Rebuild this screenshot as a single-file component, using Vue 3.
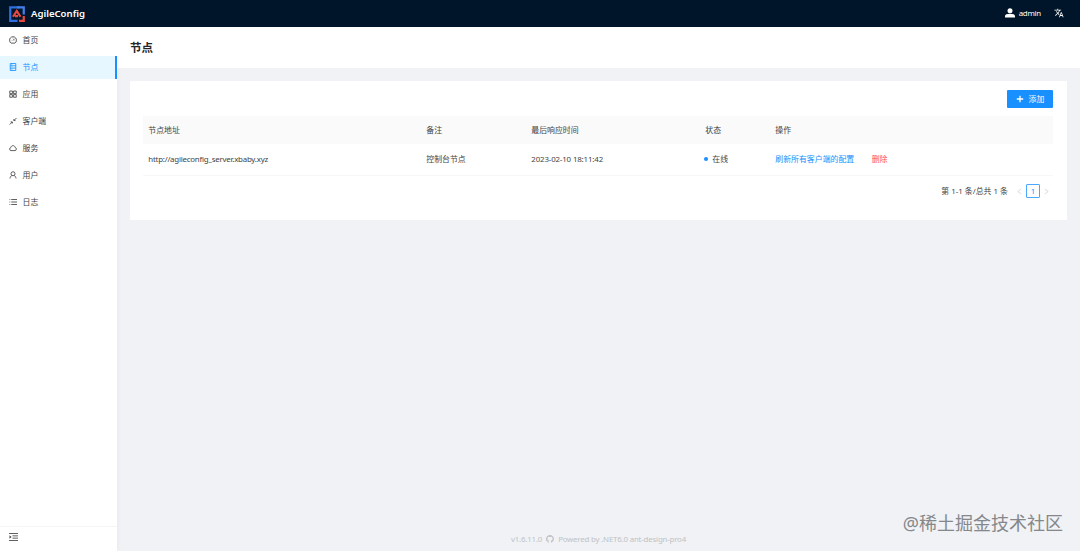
<template>
  <div class="layout">
    <header class="top-bar">
      <div class="brand">
        <svg class="logo" viewBox="0 0 32 32">
          <path d="M21 2.500H2.500V29.500H17" fill="none" stroke="#2f6fe0" stroke-width="4.500" />
          <path d="M16 2.500H29.500V17" fill="none" stroke="#3f80ea" stroke-width="4.500" />
          <path d="M29.500 20V29.500H20" fill="none" stroke="#e9483f" stroke-width="4.500" />
          <path d="M8 21.500L15.500 10L23 21.500M12 20H18" fill="none" stroke="#e9483f" stroke-width="4.500" />
        </svg>
        <span class="brand-name">AgileConfig</span>
      </div>
      <div class="top-right">
        <svg class="avatar" viewBox="0 0 20 20" fill="#fff">
          <circle cx="10" cy="5.500" r="5" />
          <path d="M0 19v-2.500C0 13 4 11.500 10 11.500S20 13 20 16.500V19z" />
        </svg>
        <span class="user-name">admin</span>
        <svg class="lang" viewBox="0 0 24 24" fill="#fff">
          <path d="M12.870 15.070l-2.540-2.510.03-.03A17.500 17.500 0 0 0 14.070 6H17V4h-7V2H8v2H1v2h11.170C11.500 7.920 10.440 9.750 9 11.350 8.070 10.320 7.300 9.190 6.690 8h-2c.73 1.630 1.730 3.170 2.980 4.560l-5.090 5.020L4 19l5-5 3.110 3.110.76-2.040zM18.500 10h-2L12 22h2l1.120-3h4.750L21 22h2l-4.500-12zm-2.620 7l1.620-4.330L19.120 17h-3.240z" />
        </svg>
      </div>
    </header>

    <div class="body">
      <aside class="sider">
        <ul class="menu">
          <li
            v-for="item in menus"
            :key="item.name"
            :class="['menu-item', active === item.name ? 'selected' : '']"
            @click="active = item.name"
          >
            <svg class="menu-icon" viewBox="0 0 16 16">
              <path v-for="d in item.paths" :key="d" :d="d" />
            </svg>
            <span>{{ item.name }}</span>
          </li>
        </ul>
        <div class="collapse">
          <svg class="menu-icon" viewBox="0 0 18 16">
            <path d="M0 1h18M7 5.700h11M7 10.300h11M0 15h18" />
            <path d="M1 4.500v7L5 8z" class="solid" />
          </svg>
        </div>
      </aside>

      <main class="main">
        <div class="page-header">
          <h1>节点</h1>
        </div>

        <section class="card">
          <div class="toolbar">
            <button type="button" class="primary-button">
              <svg viewBox="0 0 10 10"><path d="M5 1v8M1 5h8" /></svg>
              <span>添加</span>
            </button>
          </div>

          <table>
            <colgroup>
              <col class="col-address" />
              <col class="col-remark" />
              <col class="col-time" />
              <col class="col-status" />
              <col />
            </colgroup>
            <thead>
              <tr>
                <th>节点地址</th>
                <th>备注</th>
                <th>最后响应时间</th>
                <th>状态</th>
                <th>操作</th>
              </tr>
            </thead>
            <tbody>
              <tr v-for="node in nodes" :key="node.address">
                <td class="address">{{ node.address }}</td>
                <td>{{ node.remark }}</td>
                <td class="time">{{ node.lastEchoTime }}</td>
                <td><i class="dot"></i>在线</td>
                <td>
                  <a class="link">刷新所有客户端的配置</a>
                  <a class="link danger">删除</a>
                </td>
              </tr>
            </tbody>
          </table>

          <div class="pagination">
            <span class="total">第 1-1 条/总共 1 条</span>
            <svg class="arrow" viewBox="0 0 6 8"><path d="M5 1L1 4l4 3" /></svg>
            <span class="page">1</span>
            <svg class="arrow" viewBox="0 0 6 8"><path d="M1 1l4 3-4 3" /></svg>
          </div>
        </section>

        <footer class="footer">
          <span>v1.6.11.0</span>
          <svg viewBox="0 0 16 16">
            <path d="M8 0C3.580 0 0 3.580 0 8c0 3.540 2.290 6.530 5.470 7.590.4.070.55-.17.55-.38 0-.19-.01-.82-.01-1.490-2.010.37-2.530-.49-2.690-.94-.09-.23-.48-.94-.82-1.130-.28-.15-.68-.52-.01-.53.63-.01 1.080.58 1.230.82.72 1.210 1.870.87 2.330.66.07-.52.28-.87.51-1.070-1.780-.2-3.640-.89-3.640-3.950 0-.87.31-1.590.82-2.150-.08-.2-.36-1.020.08-2.120 0 0 .67-.21 2.200.82a7.600 7.600 0 0 1 4 0c1.530-1.040 2.200-.82 2.200-.82.44 1.100.16 1.920.08 2.120.51.56.82 1.270.82 2.150 0 3.070-1.870 3.750-3.650 3.950.29.25.54.73.54 1.480 0 1.070-.01 1.930-.01 2.200 0 .21.15.46.55.38A8 8 0 0 0 16 8c0-4.420-3.580-8-8-8z" />
          </svg>
          <span>Powered by .NET6.0 ant-design-pro4</span>
        </footer>
      </main>
    </div>

    <div class="watermark">@稀土掘金技术社区</div>
  </div>
</template>

<script setup>
import { ref } from 'vue'

const active = ref('节点')

const menus = [
  {
    name: '首页',
    paths: ['M4 14.200A7 7 0 1 1 12 14.200z', 'M8 9l3-3.500', 'M3.500 8.500h1M8 3.500v1M11.500 8.500h1']
  },
  {
    name: '节点',
    paths: ['M2.500 1h11v14h-11z', 'M2.500 5.600h11M2.500 10.300h11', 'M5 3.300h1.500M5 8h1.500M5 12.600h1.500']
  },
  {
    name: '应用',
    paths: ['M1.500 2h5.300v5.300H1.500zM9.200 2h5.300v5.300H9.200z', 'M1.500 9.200h5.300v5.300H1.500zM9.200 9.200h5.300v5.300H9.200z']
  },
  {
    name: '客户端',
    paths: ['M15 2L10 7M9.800 4v3.200h3.200', 'M1.500 15l5-5M3.200 9.800h3.500V13']
  },
  {
    name: '服务',
    paths: ['M4 13.200a3.200 3.200 0 0 1-.5-6.200C4.500 4.500 6 3.200 8 3.200s3.500 1.300 4.500 3.800a3.200 3.200 0 0 1-.5 6.200z']
  },
  {
    name: '用户',
    paths: ['M8 1.500a4 4 0 1 1 0 8 4 4 0 0 1 0-8z', 'M2 15c.2-3 1.600-5 3.600-6M14 15c-.2-3-1.600-5-3.600-6']
  },
  {
    name: '日志',
    paths: ['M4.500 3H16M4.500 8H16M4.500 13H16', 'M1 3h1.500M1 8h1.500M1 13h1.500']
  }
]

const nodes = [
  {
    address: 'http://agileconfig_server.xbaby.xyz',
    remark: '控制台节点',
    lastEchoTime: '2023-02-10 18:11:42'
  }
]
</script>

<style>
body {
  margin: 0;
}
</style>

<style scoped>
.layout {
  display: flex;
  flex-direction: column;
  height: 100vh;
  overflow: hidden;
  background: #f0f2f5;
  color: #434343;
  font-family: 'Noto Sans', 'Noto Sans CJK SC', sans-serif;
  font-size: 7.9px;
  line-height: 12px;
}

.top-bar {
  display: flex;
  align-items: center;
  justify-content: space-between;
  height: 27px;
  padding: 0 16px 0 9px;
  box-sizing: border-box;
  flex: none;
  background: #001529;
  color: #fff;
}

.brand {
  display: flex;
  align-items: center;
  gap: 6px;
}

.logo {
  width: 16px;
  height: 16px;
}

.brand-name {
  font-size: 9.6px;
  font-weight: 600;
}

.top-right {
  display: flex;
  align-items: center;
  padding-bottom: 1px;
}

.avatar {
  width: 10px;
  height: 10px;
  margin-right: 4px;
}

.user-name {
  margin-right: 13px;
  letter-spacing: -0.25px;
}

.lang {
  width: 10px;
  height: 10px;
}

.body {
  display: flex;
  flex: 1;
  min-height: 0;
}

.sider {
  display: flex;
  flex-direction: column;
  width: 117px;
  flex: none;
  background: #fff;
  box-shadow: 1px 0 4px rgba(0, 21, 41, 0.04);
}

.menu {
  flex: 1;
  margin: 0;
  padding: 2px 0 0;
  list-style: none;
}

.menu-item {
  display: flex;
  align-items: center;
  gap: 5.5px;
  box-sizing: border-box;
  height: 23px;
  margin-bottom: 4px;
  padding: 0 0 1px 9px;
  border-right: 2px solid transparent;
  cursor: pointer;
}

.menu-item.selected {
  background: #e6f7ff;
  border-right-color: #1890ff;
  color: #1890ff;
}

.menu-icon {
  width: 8px;
  height: 8px;
  fill: none;
  stroke: currentColor;
  stroke-width: 1.7;
}

.solid {
  fill: currentColor;
  stroke: none;
}

.collapse {
  display: flex;
  align-items: center;
  height: 25px;
  padding: 0 9px 5px;
  border-top: 1px solid #f5f5f5;
  box-sizing: border-box;
}

.collapse .menu-icon {
  width: 9px;
}

.main {
  display: flex;
  flex-direction: column;
  flex: 1;
}

.page-header {
  display: flex;
  align-items: center;
  height: 41px;
  padding-left: 13px;
  background: #fff;
}

.page-header h1 {
  margin: 0;
  color: #262626;
  font-size: 11.5px;
  font-weight: 600;
}

.card {
  height: 139px;
  margin: 13px 13px 0;
  padding: 9px 14px 0 13px;
  box-sizing: border-box;
  border-radius: 1px;
  background: #fff;
}

.toolbar {
  display: flex;
  justify-content: flex-end;
  margin-bottom: 8px;
}

.primary-button {
  display: flex;
  align-items: center;
  justify-content: center;
  gap: 5px;
  width: 46px;
  height: 18px;
  padding: 0;
  border: none;
  border-radius: 1px;
  background: #1890ff;
  color: #fff;
  font: inherit;
  cursor: pointer;
}

.primary-button svg {
  width: 8px;
  height: 8px;
  fill: none;
  stroke: #fff;
  stroke-width: 1.6;
}

table {
  width: 100%;
  table-layout: fixed;
  border-collapse: separate;
  border-spacing: 0;
}

.col-address {
  width: 278px;
}

.col-remark {
  width: 105px;
}

.col-time {
  width: 174px;
}

.col-status {
  width: 70px;
}

th,
td {
  box-sizing: border-box;
  padding: 0 0 0 5.3px;
  text-align: left;
  font-weight: 400;
  white-space: nowrap;
}

th {
  height: 28px;
  background: #fafafa;
}

td {
  height: 32px;
  padding-bottom: 1px;
  border-bottom: 1px solid #f7f7f7;
}

.address {
  letter-spacing: -0.23px;
}

.time {
  letter-spacing: -0.15px;
}

.dot {
  display: inline-block;
  width: 4px;
  height: 4px;
  margin: 0 4px 0 -1px;
  border-radius: 50%;
  background: #1890ff;
  vertical-align: 1px;
}

.link {
  margin-right: 15px;
  color: #1890ff;
  cursor: pointer;
}

.link + .link {
  margin-left: 2.5px;
}

.danger {
  color: #ff4d4f;
}

.pagination {
  display: flex;
  align-items: center;
  justify-content: flex-end;
  margin-top: 8px;
  padding-right: 4px;
}

.total {
  margin-right: 9px;
}

.arrow {
  width: 5px;
  height: 7px;
  fill: none;
  stroke: #c8c8c8;
  stroke-width: 0.8;
}

.page {
  width: 12px;
  height: 12px;
  margin: 0 4px;
  border: 1px solid #4ba8ff;
  border-radius: 1px;
  color: #1890ff;
  text-align: center;
}

.footer {
  display: flex;
  align-items: center;
  justify-content: center;
  gap: 4px;
  margin-top: auto;
  padding-bottom: 6px;
  color: #c0c2c5;
  letter-spacing: -0.2px;
}

.footer svg {
  width: 8px;
  height: 8px;
  fill: currentColor;
}

.watermark {
  position: absolute;
  right: 17px;
  bottom: 16px;
  color: #85878a;
  font-size: 18px;
  line-height: 24px;
}
</style>
